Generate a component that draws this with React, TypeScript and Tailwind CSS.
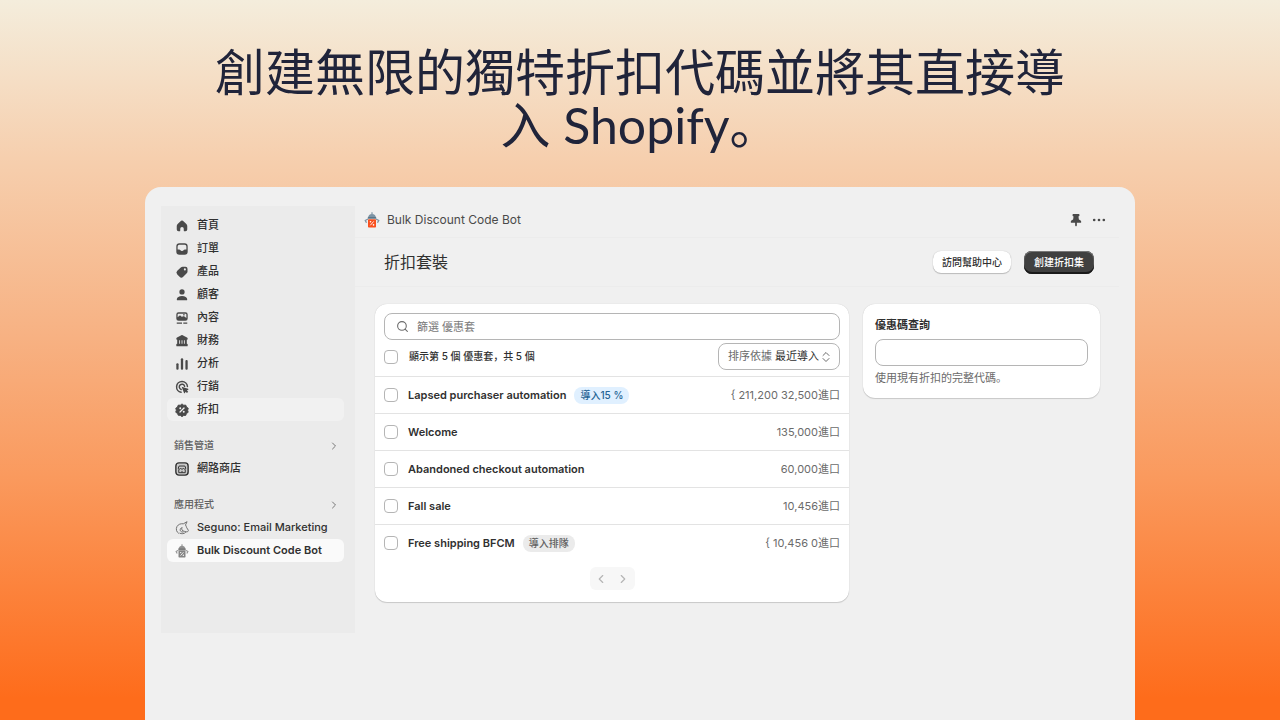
import type { ReactNode } from 'react';
import { ChevronLeft, ChevronRight, Search } from 'lucide-react';

type IconProps = { children: ReactNode };

function Icon({ children }: IconProps) {
  return (
    <svg viewBox="0 0 16 16" className="size-3.5 shrink-0" fill="currentColor" aria-hidden="true">
      {children}
    </svg>
  );
}

const navItems = [
  {
    label: '首頁',
    icon: <path d="M7 2.1a1.5 1.5 0 0 1 2 0l4 3.600c.6.600 1 1.400 1 2.200V12a2 2 0 0 1-2 2h-1a1 1 0 0 1-1-1v-2a2 2 0 0 0-4 0v2a1 1 0 0 1-1 1H4a2 2 0 0 1-2-2V7.900c0-.8.4-1.600 1-2.200z" />,
  },
  {
    label: '訂單',
    icon: <path fillRule="evenodd" d="M5 1.500h6A3.500 3.500 0 0 1 14.500 5v6a3.500 3.500 0 0 1-3.500 3.500H5A3.500 3.500 0 0 1 1.500 11V5A3.500 3.500 0 0 1 5 1.500zM5 3a2 2 0 0 0-2 2v3.500h1.800c.5 0 .9.3 1.200.7.500.7 1.100 1.100 2 1.100s1.500-.4 2-1.100c.3-.4.7-.7 1.200-.7H13V5a2 2 0 0 0-2-2z" />,
  },
  {
    label: '產品',
    icon: <path fillRule="evenodd" d="M8.700 2H12a2.300 2.300 0 0 1 2.300 2.300v3c0 .8-.3 1.500-.9 2.100l-4 4a3 3 0 0 1-4.200 0L2.600 10.800a3 3 0 0 1 0-4.200L6.600 2.900C7.200 2.300 7.900 2 8.700 2zM11.300 6.200a1.200 1.200 0 1 0 0-2.400 1.200 1.200 0 0 0 0 2.400z" />,
  },
  {
    label: '顧客',
    icon: (
      <>
        <circle cx="8" cy="4.500" r="3" />
        <path d="M2 13c0-2.500 2.700-4 6-4s6 1.500 6 4c0 .6-.4 1-1 1H3c-.6 0-1-.4-1-1z" />
      </>
    ),
  },
  {
    label: '內容',
    icon: (
      <>
        <path fillRule="evenodd" d="M4 1.500h8A2.500 2.500 0 0 1 14.500 4v4.500A2.500 2.500 0 0 1 12 11H4a2.500 2.500 0 0 1-2.500-2.500V4A2.500 2.500 0 0 1 4 1.500zM3 7l2-1.700c.4-.4 1-.4 1.400 0L8 6.800l1-.7c.5-.3 1-.3 1.400 0L13 8V4a1 1 0 0 0-1-1H4a1 1 0 0 0-1 1z" />
        <circle cx="10.200" cy="4.400" r=".9" />
        <path d="M2 13h6v1.500H2zM9.500 13H14v1.500H9.500z" />
      </>
    ),
  },
  {
    label: '財務',
    icon: <path d="M7.300 1.400c.4-.2 1-.2 1.400 0l5 2.700c.5.3.8.7.8 1.200v.4c0 .4-.3.8-.8.8H13.500V11h.2c.4 0 .8.3.8.8v1.500c0 .4-.3.7-.8.7H2.300c-.5 0-.8-.3-.8-.7v-1.500c0-.5.4-.8.8-.8h.2V6.500h-.2c-.5 0-.8-.4-.8-.8v-.4c0-.5.3-.9.8-1.200zM4.800 7v4h1V7zM7.500 7v4h1V7zM10.200 7v4h1V7z" fillRule="evenodd" />,
  },
  {
    label: '分析',
    icon: (
      <>
        <rect x="1.500" y="7" width="2.600" height="7.500" rx="1.200" />
        <rect x="6.700" y="1.500" width="2.600" height="13" rx="1.200" />
        <rect x="11.900" y="3.500" width="2.600" height="11" rx="1.200" />
      </>
    ),
  },
  {
    label: '行銷',
    icon: (
      <>
        <path d="M7 14A6.200 6.200 0 1 1 14.200 7.500M7 10.800A3.100 3.100 0 1 1 11 7.200" fill="none" stroke="currentColor" strokeWidth="1.700" strokeLinecap="round" />
        <path d="M7.600 7.600l7.400 2.500c.5.200.5.800.1 1l-1.500.8 1.500 1.600-1.400 1.400-1.600-1.500-.8 1.500c-.2.4-.8.4-1-.1z" />
      </>
    ),
  },
  {
    label: '折扣',
    active: true,
    icon: (
      <>
        <path d="M8 1l1.900 1.500 2.400-.1.900 2.200 2 1.400-.7 2.300.6 2.300-2 1.400-.8 2.200-2.400.1L8 15.600l-1.900-1.400-2.400-.1-.9-2.200-2-1.400.7-2.300L.8 6l2-1.400.9-2.200 2.400.1z" stroke="currentColor" strokeLinejoin="round" />
        <path d="M5.700 10.300l4.600-4.600" stroke="#f1f1f1" strokeWidth="1.400" strokeLinecap="round" />
        <circle cx="6" cy="6" r="1.100" fill="#f1f1f1" />
        <circle cx="10" cy="10" r="1.100" fill="#f1f1f1" />
      </>
    ),
  },
];

const sets = [
  { name: 'Lapsed purchaser automation', badge: '導入15 %', tone: 'bg-[#e0f0ff] text-[#1f6394]', count: '{ 211,200 32,500進口' },
  { name: 'Welcome', count: '135,000進口' },
  { name: 'Abandoned checkout automation', count: '60,000進口' },
  { name: 'Fall sale', count: '10,456進口' },
  { name: 'Free shipping BFCM', badge: '導入排隊', tone: 'bg-[#ebebeb] text-[#616161]', count: '{ 10,456 0進口' },
];

function StoreIcon() {
  return (
    <Icon>
      <rect x="1" y="1" width="14" height="14" rx="3.500" fill="#c8c8c8" stroke="currentColor" strokeWidth="1.600" />
      <path d="M4.700 4.600h6.600l1 2.400c0 .8-.6 1.200-1.200 1.200S9.900 7.800 9.600 7.200c-.2.600-.8 1-1.600 1s-1.400-.4-1.600-1c-.3.600-.9 1-1.500 1S3.700 7.800 3.700 7z" fill="none" stroke="currentColor" strokeWidth="1.100" />
      <path d="M4.300 8.500v3.700h7.400V8.500M8 12v-1.800" fill="none" stroke="currentColor" strokeWidth="1.100" />
    </Icon>
  );
}

function UnicornIcon() {
  return (
    <Icon>
      <path
        d="M4 14C1.500 12.500.8 9 2.300 6.300 3.800 3.700 6.500 2.800 9.500 3.200L13.800.8 12 4.500c.8 1 .9 2.100 1.400 3.200l1.800 2.800c.3.700-.2 1.500-1 1.700l-1.400.2c-1.600.1-2.500-1.200-4-1.300M5.500 14c2 1 5 .7 6.500-.8M8.800 11c-1.300-.8-1.500-2.400-.6-3.500-1.700.4-2.500 1.800-2.200 3.300.4 1.200 1.600 2 3.200 1.900"
        fill="none"
        stroke="#6b6b6b"
        strokeWidth="1.100"
        strokeLinecap="round"
        strokeLinejoin="round"
      />
    </Icon>
  );
}

function RobotIcon({ color }: { color?: boolean }) {
  const metal = color ? '#7d94a5' : '#929292';
  const body = color ? '#f9501e' : '#858585';
  return (
    <svg viewBox="0 0 16 16" className={color ? 'size-4 shrink-0' : 'size-3.5 shrink-0'} aria-hidden="true">
      <path d="M7.400.3h1.200v2H7.400z" fill={metal} />
      <path d="M4 6.200c0-2.600 1.700-4.200 4-4.200s4 1.600 4 4.200z" fill={metal} />
      <path d="M3.800 5.300h8.400v1.300H3.800z" fill={color ? '#4d6a7d' : '#6a6a6a'} />
      <path d="M4 7L1.300 8.500l1.200 2.300M12 7l2.700 1.500-1.200 2.300" fill="none" stroke={metal} strokeWidth="1.300" />
      <rect x="4" y="7.200" width="8" height="8.300" rx=".8" fill={body} />
      <path d="M6.300 13.300l3.400-3.900" stroke="#fff" strokeWidth=".9" />
      <circle cx="6.500" cy="9.800" r=".8" fill="#fff" />
      <circle cx="9.500" cy="12.900" r=".8" fill="#fff" />
    </svg>
  );
}

function Section({ label, children }: { label: string; children: ReactNode }) {
  return (
    <section className="mt-[13px]">
      <button className="flex h-[23px] w-full items-center justify-between pr-1 pl-[7px] text-[10px] font-medium text-[#616161]">
        {label}
        <ChevronRight className="size-3 text-[#777777]" />
      </button>
      {children}
    </section>
  );
}

function NavLink({ icon, label, className = '' }: { icon: ReactNode; label: string; className?: string }) {
  return (
    <a href="#" className={`flex h-[23px] items-center gap-2 rounded-md pl-2 text-[11px] text-[#303030] ${className}`}>
      {icon}
      {label}
    </a>
  );
}

function Sidebar() {
  return (
    <nav className="w-[194px] shrink-0 bg-[#ebebeb] pt-2 pr-[11px] pb-[71px] pl-[6px]">
      {navItems.map((item) => (
        <NavLink
          key={item.label}
          icon={<span className="text-[#4a4a4a]"><Icon>{item.icon}</Icon></span>}
          label={item.label}
          className={item.active ? 'bg-[#f1f1f1] font-medium' : 'font-medium'}
        />
      ))}
      <Section label="銷售管道">
        <NavLink icon={<StoreIcon />} label="網路商店" className="font-medium" />
      </Section>
      <Section label="應用程式">
        <NavLink icon={<UnicornIcon />} label="Seguno: Email Marketing" className="font-medium" />
        <NavLink icon={<RobotIcon />} label="Bulk Discount Code Bot" className="bg-[#fafafa] font-semibold" />
      </Section>
    </nav>
  );
}

function Checkbox({ label }: { label: string }) {
  return (
    <input
      type="checkbox"
      aria-label={label}
      className="size-3.5 shrink-0 appearance-none rounded border border-[#b5b5b5] bg-white"
    />
  );
}

function SetList() {
  return (
    <div className="overflow-hidden rounded-xl bg-white pb-3 shadow-[0_1px_1px_rgba(0,0,0,0.15),0_0_1px_rgba(0,0,0,0.2)]">
      <div className="flex flex-col gap-[3px] px-[9px] pt-[9px] pb-[6px]">
        <label className="flex h-[27px] items-center gap-2 rounded-lg border border-[#b5b5b5] px-[11px]">
          <Search className="size-[13px] text-[#6b6b6b]" />
          <input
            type="text"
            aria-label="篩選 優惠套"
            placeholder="篩選 優惠套"
            className="min-w-0 flex-1 pt-px text-[11px] outline-none placeholder:text-[#7a7a7a]"
          />
        </label>
        <div className="flex items-center">
          <label className="flex items-center gap-[11px] text-[10px] font-medium text-[#303030]">
            <Checkbox label="全選" />
            顯示第 5 個 優惠套，共 5 個
          </label>
          <label className="ml-auto flex h-[27px] items-center gap-[3px] rounded-lg border border-[#b5b5b5] px-[9px] text-[11px] text-[#6b6b6b]">
            排序依據
            <select className="appearance-none text-[#303030]">
              <option>最近導入</option>
            </select>
            <svg viewBox="0 0 8 12" className="h-3 w-2" fill="none" stroke="currentColor" strokeLinecap="round" strokeLinejoin="round" aria-hidden="true">
              <path d="M1 4.500L4 1.500l3 3M1 7.500l3 3 3-3" />
            </svg>
          </label>
        </div>
      </div>
      <ul>
        {sets.map((set) => (
          <li key={set.name} className="flex h-[37px] items-center border-t border-[#e3e3e3] px-[9px]">
            <Checkbox label={set.name} />
            <span className="ml-[10px] text-[11px] font-semibold text-[#303030]">{set.name}</span>
            {set.badge && (
              <span className={`ml-2 flex h-[17px] items-center rounded-lg px-1.5 text-[10px] font-medium ${set.tone}`}>
                {set.badge}
              </span>
            )}
            <span className="ml-auto text-[11px] text-[#6b6b6b]">{set.count}</span>
          </li>
        ))}
      </ul>
      <div className="mx-auto mt-[6px] flex h-[23px] w-[45px] overflow-hidden rounded-md bg-[#f7f7f7] text-[#b5b5b5]">
        <button aria-label="上一頁" className="flex flex-1 items-center justify-center">
          <ChevronLeft className="size-3.5" />
        </button>
        <button aria-label="下一頁" className="flex flex-1 items-center justify-center">
          <ChevronRight className="size-3.5" />
        </button>
      </div>
    </div>
  );
}

function Lookup() {
  return (
    <div className="rounded-xl bg-white px-3 pt-3 pb-[11px] shadow-[0_1px_1px_rgba(0,0,0,0.15),0_0_1px_rgba(0,0,0,0.2)]">
      <label htmlFor="code" className="block text-[11px] leading-[18px] font-semibold text-[#303030]">
        優惠碼查詢
      </label>
      <input id="code" type="text" className="mt-[5px] block h-[27px] w-full rounded-lg border border-[#b5b5b5] px-2 text-[11px]" />
      <p className="mt-[3px] text-[11px] leading-[18px] text-[#6b6b6b]">使用現有折扣的完整代碼。</p>
    </div>
  );
}

export default function App() {
  return (
    <div
      lang="zh"
      className="flex min-h-screen flex-col bg-[linear-gradient(#f4eddc_0%,#f6cfae_22%,#f7b182_47%,#fa9a5e_66%,#fe6c1b_97%)] px-[145px] pt-[46px] font-[Inter,'Noto_Sans_CJK_SC',sans-serif]"
    >
      <h1 className="mx-auto max-w-[870px] text-center font-[Lato,'Noto_Sans_CJK_SC',sans-serif] text-[50px] leading-[53px] text-[#20243a]">
        創建無限的獨特折扣代碼並將其直接導入 Shopify。
      </h1>
      <div className="mt-[35px] flex flex-1 items-start rounded-t-2xl bg-[#f0f0f0] px-4 pt-[19px]">
        <Sidebar />
        <main className="min-w-0 flex-1">
          <header className="flex h-8 items-center border-b border-[#ececec] pr-[13px] pb-1 pl-[9px] text-xs text-[#4a4a4a]">
            <RobotIcon color />
            <span className="ml-[7px]">Bulk Discount Code Bot</span>
            <button aria-label="釘選" className="ml-auto">
              <svg viewBox="0 0 16 16" className="size-3.5" fill="currentColor">
                <path d="M5 1h6c.6 0 1 .5 1 1.200 0 .8-.5 1.500-1.200 1.800l.5 3.300c1.700.5 2.700 1.500 2.700 2.900 0 .6-.4 1-1 1H9v3.100L8 15.500l-1-1.200v-3.100H3c-.6 0-1-.4-1-1 0-1.400 1-2.400 2.700-2.900L5.200 4C4.500 3.700 4 3 4 2.200 4 1.500 4.400 1 5 1z" />
              </svg>
            </button>
            <button aria-label="更多" className="ml-[9px]">
              <svg viewBox="0 0 16 16" className="size-3.5" fill="currentColor">
                <circle cx="2.500" cy="8" r="1.500" />
                <circle cx="8" cy="8" r="1.500" />
                <circle cx="13.500" cy="8" r="1.500" />
              </svg>
            </button>
          </header>
          <div className="flex h-[49px] items-center border-b border-[#ececec] pr-[25px] pl-[29px]">
            <h2 className="text-base text-[#303030]">折扣套裝</h2>
            <button className="ml-auto h-[22px] rounded-lg bg-white px-[9px] text-[10px] font-medium text-[#303030] shadow-[0_1px_1px_rgba(0,0,0,0.2),0_0_1px_rgba(0,0,0,0.25)]">
              訪問幫助中心
            </button>
            <button className="ml-[13px] h-[23px] rounded-lg bg-[#404040] px-[10px] text-[10px] font-medium text-white shadow-[inset_0_-2px_0_#1a1a1a,inset_0_1px_0_#777777,inset_0_0_0_1px_#555555]">
              創建折扣集
            </button>
          </div>
          <div className="grid grid-cols-[2fr_1fr] items-start gap-[14px] pt-[17px] pr-[19px] pl-5">
            <SetList />
            <Lookup />
          </div>
        </main>
      </div>
    </div>
  );
}
